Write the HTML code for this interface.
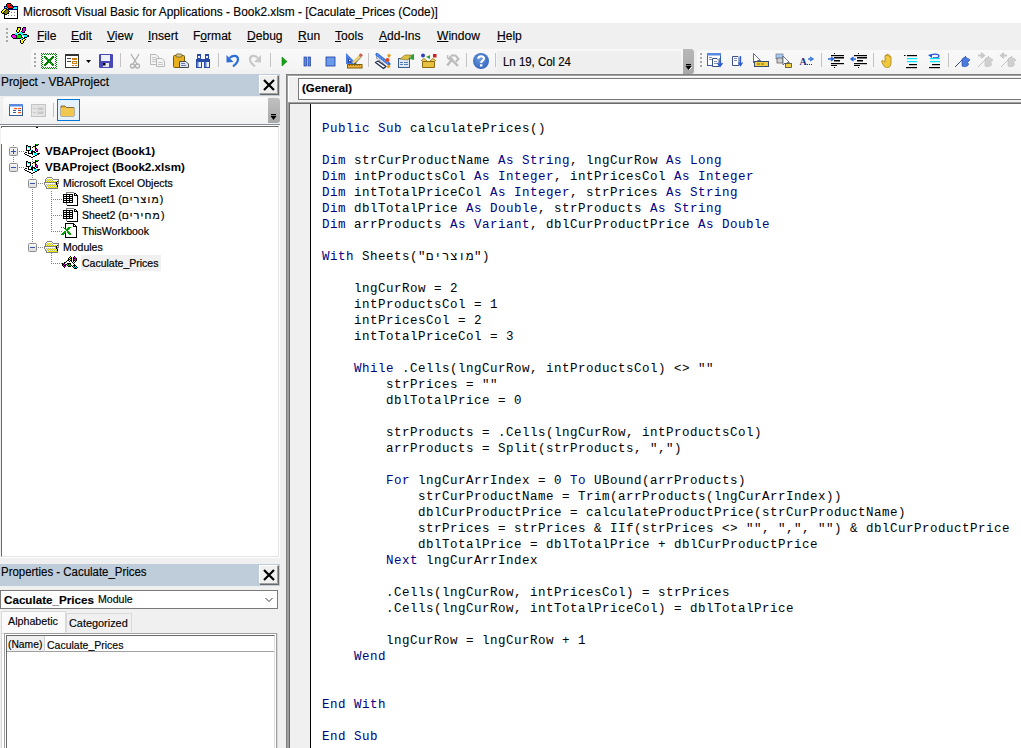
<!DOCTYPE html>
<html><head><meta charset="utf-8">
<style>
*{box-sizing:border-box;margin:0;padding:0}
html,body{width:1021px;height:748px;overflow:hidden;background:#f0f0f0;font-family:"Liberation Sans",sans-serif;position:relative}
.a{position:absolute}
.t{position:absolute;white-space:pre;line-height:1;color:#000;-webkit-text-stroke:.15px #000}
svg{position:absolute;overflow:visible}
.menu{position:absolute;top:30px;font-size:12.5px;transform:scaleX(.965);transform-origin:0 0;color:#000;-webkit-text-stroke:.15px #000;white-space:pre;line-height:12px}
.menu u{text-decoration:underline;text-underline-offset:1px;text-decoration-thickness:1px}
.ptitle{position:absolute;left:0;width:280px;height:22px;background:#bfcddb}
.xbtn{position:absolute;width:19px;height:19px;background:#f0f0f0;border:1px solid;border-color:#fff #a0a0a0 #a0a0a0 #fff;box-shadow:1px 1px 0 #696969}
.code{position:absolute;left:322px;top:121px;font-family:"Liberation Mono",monospace;font-size:12.5px;letter-spacing:.5px;line-height:16px;white-space:pre;color:#000}
.k{color:#00007f}
.tr{position:absolute;font-size:10.5px;white-space:pre;line-height:12px;color:#000;-webkit-text-stroke:.2px #000}
.trb{position:absolute;font-size:11.6px;font-weight:bold;white-space:pre;line-height:12px;color:#000}
</style></head><body>
<!-- title bar -->
<div class="a" style="left:0;top:0;width:1021px;height:23px;background:#fff"></div>
<svg style="left:0;top:0" width="24" height="23"><rect x="7" y="3" width="4" height="1" fill="#000"/>
<rect x="6" y="4" width="1" height="1" fill="#000"/>
<rect x="7" y="4" width="4" height="1" fill="#ff0000"/>
<rect x="11" y="4" width="1" height="1" fill="#000"/>
<rect x="6" y="5" width="1" height="1" fill="#000"/>
<rect x="7" y="5" width="3" height="1" fill="#ff0000"/>
<rect x="10" y="5" width="1" height="1" fill="#000"/>
<rect x="11" y="5" width="1" height="1" fill="#ff0000"/>
<rect x="12" y="5" width="1" height="1" fill="#000"/>
<rect x="4" y="6" width="2" height="1" fill="#000080"/>
<rect x="6" y="6" width="1" height="1" fill="#000"/>
<rect x="7" y="6" width="5" height="1" fill="#ff0000"/>
<rect x="12" y="6" width="1" height="1" fill="#000"/>
<rect x="13" y="6" width="5" height="1" fill="#000080"/>
<rect x="4" y="7" width="1" height="1" fill="#000080"/>
<rect x="5" y="7" width="2" height="1" fill="#00ffff"/>
<rect x="7" y="7" width="1" height="1" fill="#000"/>
<rect x="8" y="7" width="5" height="1" fill="#ff0000"/>
<rect x="13" y="7" width="1" height="1" fill="#000"/>
<rect x="14" y="7" width="3" height="1" fill="#00ffff"/>
<rect x="17" y="7" width="1" height="1" fill="#000080"/>
<rect x="4" y="8" width="1" height="1" fill="#000080"/>
<rect x="5" y="8" width="2" height="1" fill="#000"/>
<rect x="7" y="8" width="1" height="1" fill="#00ffff"/>
<rect x="8" y="8" width="5" height="1" fill="#000"/>
<rect x="13" y="8" width="4" height="1" fill="#00ffff"/>
<rect x="17" y="8" width="1" height="1" fill="#000080"/>
<rect x="3" y="9" width="1" height="1" fill="#000"/>
<rect x="4" y="9" width="2" height="1" fill="#ffff00"/>
<rect x="6" y="9" width="1" height="1" fill="#000"/>
<rect x="7" y="9" width="11" height="1" fill="#000080"/>
<rect x="2" y="10" width="1" height="1" fill="#000"/>
<rect x="3" y="10" width="2" height="1" fill="#ffff00"/>
<rect x="5" y="10" width="1" height="1" fill="#000"/>
<rect x="6" y="10" width="2" height="1" fill="#808000"/>
<rect x="8" y="10" width="1" height="1" fill="#000"/>
<rect x="9" y="10" width="8" height="1" fill="#fff"/>
<rect x="17" y="10" width="1" height="1" fill="#000"/>
<rect x="1" y="11" width="1" height="1" fill="#000"/>
<rect x="2" y="11" width="2" height="1" fill="#ffff00"/>
<rect x="4" y="11" width="1" height="1" fill="#000"/>
<rect x="5" y="11" width="4" height="1" fill="#808000"/>
<rect x="9" y="11" width="1" height="1" fill="#000"/>
<rect x="10" y="11" width="7" height="1" fill="#fff"/>
<rect x="17" y="11" width="1" height="1" fill="#000"/>
<rect x="1" y="12" width="1" height="1" fill="#000"/>
<rect x="2" y="12" width="1" height="1" fill="#ffff00"/>
<rect x="3" y="12" width="1" height="1" fill="#000"/>
<rect x="4" y="12" width="4" height="1" fill="#808000"/>
<rect x="8" y="12" width="1" height="1" fill="#000"/>
<rect x="9" y="12" width="2" height="1" fill="#fff"/>
<rect x="11" y="12" width="1" height="1" fill="#808080"/>
<rect x="12" y="12" width="2" height="1" fill="#fff"/>
<rect x="14" y="12" width="1" height="1" fill="#808080"/>
<rect x="15" y="12" width="2" height="1" fill="#fff"/>
<rect x="17" y="12" width="1" height="1" fill="#000"/>
<rect x="2" y="13" width="3" height="1" fill="#000"/>
<rect x="5" y="13" width="2" height="1" fill="#808000"/>
<rect x="7" y="13" width="2" height="1" fill="#000"/>
<rect x="9" y="13" width="8" height="1" fill="#fff"/>
<rect x="17" y="13" width="1" height="1" fill="#000"/>
<rect x="4" y="14" width="3" height="1" fill="#000"/>
<rect x="7" y="14" width="10" height="1" fill="#fff"/>
<rect x="17" y="14" width="1" height="1" fill="#000"/>
<rect x="4" y="15" width="1" height="1" fill="#000"/>
<rect x="5" y="15" width="3" height="1" fill="#fff"/>
<rect x="8" y="15" width="1" height="1" fill="#808080"/>
<rect x="9" y="15" width="2" height="1" fill="#fff"/>
<rect x="11" y="15" width="1" height="1" fill="#808080"/>
<rect x="12" y="15" width="2" height="1" fill="#fff"/>
<rect x="14" y="15" width="1" height="1" fill="#808080"/>
<rect x="15" y="15" width="2" height="1" fill="#fff"/>
<rect x="17" y="15" width="1" height="1" fill="#000"/>
<rect x="4" y="16" width="1" height="1" fill="#000"/>
<rect x="5" y="16" width="12" height="1" fill="#fff"/>
<rect x="17" y="16" width="1" height="1" fill="#000"/>
<rect x="4" y="17" width="1" height="1" fill="#000"/>
<rect x="5" y="17" width="12" height="1" fill="#fff"/>
<rect x="17" y="17" width="1" height="1" fill="#000"/>
<rect x="4" y="18" width="14" height="1" fill="#000"/></svg>
<div class="t" style="left:23px;top:6px;font-size:12.5px;transform:scaleX(.95);transform-origin:0 0">Microsoft Visual Basic for Applications - Book2.xlsm - [Caculate_Prices (Code)]</div>

<!-- menu bar -->
<svg style="left:0;top:0" width="40" height="49">
 <g fill="#a8a8a8"><rect x="6" y="28" width="2" height="2"/><rect x="6" y="32" width="2" height="2"/><rect x="6" y="36" width="2" height="2"/><rect x="6" y="40" width="2" height="2"/></g>
 <!-- vba icon -->
<rect x="17" y="27" width="4" height="1" fill="#000"/>
<rect x="23" y="27" width="3" height="1" fill="#000"/>
<rect x="17" y="28" width="1" height="1" fill="#000"/>
<rect x="18" y="28" width="2" height="1" fill="#ffff00"/>
<rect x="20" y="28" width="1" height="1" fill="#000"/>
<rect x="22" y="28" width="1" height="1" fill="#000"/>
<rect x="23" y="28" width="2" height="1" fill="#ff00ff"/>
<rect x="25" y="28" width="1" height="1" fill="#000"/>
<rect x="17" y="29" width="1" height="1" fill="#000"/>
<rect x="18" y="29" width="2" height="1" fill="#ffff00"/>
<rect x="20" y="29" width="1" height="1" fill="#000"/>
<rect x="22" y="29" width="1" height="1" fill="#000"/>
<rect x="23" y="29" width="2" height="1" fill="#ff00ff"/>
<rect x="25" y="29" width="1" height="1" fill="#000"/>
<rect x="16" y="30" width="1" height="1" fill="#000"/>
<rect x="17" y="30" width="2" height="1" fill="#ffff00"/>
<rect x="19" y="30" width="1" height="1" fill="#000"/>
<rect x="22" y="30" width="1" height="1" fill="#000"/>
<rect x="23" y="30" width="2" height="1" fill="#ff00ff"/>
<rect x="25" y="30" width="1" height="1" fill="#000"/>
<rect x="16" y="31" width="1" height="1" fill="#000"/>
<rect x="17" y="31" width="2" height="1" fill="#ffff00"/>
<rect x="19" y="31" width="1" height="1" fill="#000"/>
<rect x="21" y="31" width="1" height="1" fill="#000"/>
<rect x="22" y="31" width="2" height="1" fill="#ff00ff"/>
<rect x="24" y="31" width="1" height="1" fill="#000"/>
<rect x="17" y="32" width="2" height="1" fill="#000"/>
<rect x="20" y="32" width="2" height="1" fill="#00ffff"/>
<rect x="22" y="32" width="3" height="1" fill="#000"/>
<rect x="15" y="33" width="2" height="1" fill="#00ffff"/>
<rect x="19" y="33" width="4" height="1" fill="#00ffff"/>
<rect x="12" y="34" width="3" height="1" fill="#000"/>
<rect x="15" y="34" width="2" height="1" fill="#00ffff"/>
<rect x="18" y="34" width="3" height="1" fill="#000"/>
<rect x="21" y="34" width="2" height="1" fill="#00ffff"/>
<rect x="23" y="34" width="4" height="1" fill="#000"/>
<rect x="11" y="35" width="1" height="1" fill="#000"/>
<rect x="12" y="35" width="3" height="1" fill="#ff00ff"/>
<rect x="15" y="35" width="2" height="1" fill="#000"/>
<rect x="17" y="35" width="4" height="1" fill="#00e000"/>
<rect x="21" y="35" width="1" height="1" fill="#000"/>
<rect x="22" y="35" width="1" height="1" fill="#fff"/>
<rect x="23" y="35" width="4" height="1" fill="#00ffff"/>
<rect x="27" y="35" width="2" height="1" fill="#000"/>
<rect x="11" y="36" width="1" height="1" fill="#000"/>
<rect x="12" y="36" width="4" height="1" fill="#ff00ff"/>
<rect x="16" y="36" width="1" height="1" fill="#000"/>
<rect x="17" y="36" width="4" height="1" fill="#00e000"/>
<rect x="21" y="36" width="1" height="1" fill="#000"/>
<rect x="22" y="36" width="2" height="1" fill="#fff"/>
<rect x="24" y="36" width="3" height="1" fill="#00ffff"/>
<rect x="27" y="36" width="2" height="1" fill="#000"/>
<rect x="12" y="37" width="1" height="1" fill="#000"/>
<rect x="13" y="37" width="3" height="1" fill="#ff00ff"/>
<rect x="16" y="37" width="1" height="1" fill="#000"/>
<rect x="17" y="37" width="4" height="1" fill="#00e000"/>
<rect x="21" y="37" width="2" height="1" fill="#000"/>
<rect x="23" y="37" width="1" height="1" fill="#fff"/>
<rect x="24" y="37" width="3" height="1" fill="#000"/>
<rect x="13" y="38" width="8" height="1" fill="#000"/>
<rect x="21" y="38" width="2" height="1" fill="#00ffff"/>
<rect x="23" y="38" width="2" height="1" fill="#000"/>
<rect x="21" y="39" width="1" height="1" fill="#00ffff"/>
<rect x="22" y="39" width="1" height="1" fill="#000"/>
<rect x="23" y="39" width="2" height="1" fill="#ffff00"/>
<rect x="25" y="39" width="1" height="1" fill="#000"/>
<rect x="20" y="40" width="1" height="1" fill="#000"/>
<rect x="21" y="40" width="3" height="1" fill="#ffff00"/>
<rect x="24" y="40" width="1" height="1" fill="#000"/>
<rect x="20" y="41" width="1" height="1" fill="#000"/>
<rect x="21" y="41" width="2" height="1" fill="#ffff00"/>
<rect x="23" y="41" width="1" height="1" fill="#000"/>
<rect x="20" y="42" width="1" height="1" fill="#000"/>
<rect x="21" y="42" width="2" height="1" fill="#ffff00"/>
<rect x="23" y="42" width="1" height="1" fill="#000"/>
<rect x="21" y="43" width="2" height="1" fill="#000"/>
</svg>
<div class="menu" style="left:37px"><u>F</u>ile</div>
<div class="menu" style="left:71px"><u>E</u>dit</div>
<div class="menu" style="left:107px"><u>V</u>iew</div>
<div class="menu" style="left:148px"><u>I</u>nsert</div>
<div class="menu" style="left:193px">F<u>o</u>rmat</div>
<div class="menu" style="left:247px"><u>D</u>ebug</div>
<div class="menu" style="left:298px"><u>R</u>un</div>
<div class="menu" style="left:335px"><u>T</u>ools</div>
<div class="menu" style="left:379px"><u>A</u>dd-Ins</div>
<div class="menu" style="left:437px"><u>W</u>indow</div>
<div class="menu" style="left:497px"><u>H</u>elp</div>

<!-- toolbars bg -->
<div class="a" style="left:31px;top:49px;width:663px;height:25px;background:linear-gradient(#f9f9f9,#f5f5f5 70%,#f1f1f1);border-top-left-radius:4px"></div>
<div class="a" style="left:497px;top:51px;width:184px;height:22px;background:#efefef"></div>
<div class="a" style="left:683px;top:49px;width:11px;height:25px;background:linear-gradient(#b8b8b8,#a8a8a8);border-radius:0 3px 3px 0"></div>
<svg style="left:683px;top:49px" width="11" height="25"><rect x="3" y="15" width="5" height="1.3" fill="#000"/><path d="M2.5 17 L8.5 17 L5.5 21 Z" fill="#000"/><path d="M6 21 L9 18" stroke="#fff" stroke-width="1"/></svg>
<div class="a" style="left:697px;top:50px;width:324px;height:24px;background:linear-gradient(#f9f9f9,#f5f5f5 70%,#f1f1f1);border-top-left-radius:4px"></div>
<div class="t" style="left:503px;top:56px;font-size:12.5px;transform:scaleX(.914);transform-origin:0 0">Ln 19, Col 24</div>

<svg id="tbicons" style="left:0;top:0" width="1021" height="75">
 <!-- grips -->
 <g fill="#a8a8a8"><rect x="34" y="53" width="2" height="2"/><rect x="34" y="57" width="2" height="2"/><rect x="34" y="61" width="2" height="2"/><rect x="34" y="65" width="2" height="2"/>
 <rect x="700" y="53" width="2" height="2"/><rect x="700" y="57" width="2" height="2"/><rect x="700" y="61" width="2" height="2"/><rect x="700" y="65" width="2" height="2"/></g>
 <!-- separators -->
 <g fill="#c4c4c4"><rect x="120" y="53" width="1" height="14"/><rect x="218" y="53" width="1" height="14"/><rect x="270" y="53" width="1" height="14"/><rect x="368" y="53" width="1" height="14"/><rect x="466" y="53" width="1" height="14"/><rect x="495" y="53" width="1" height="14"/>
 <rect x="821" y="53" width="1" height="14"/><rect x="873" y="53" width="1" height="14"/><rect x="948" y="53" width="1" height="14"/></g>
 <!-- excel -->
<rect x="41" y="53" width="1" height="1" fill="#008000"/>
<rect x="42" y="53" width="1" height="1" fill="#fff"/>
<rect x="43" y="53" width="1" height="1" fill="#008000"/>
<rect x="44" y="53" width="1" height="1" fill="#fff"/>
<rect x="45" y="53" width="1" height="1" fill="#008000"/>
<rect x="46" y="53" width="1" height="1" fill="#fff"/>
<rect x="47" y="53" width="1" height="1" fill="#008000"/>
<rect x="48" y="53" width="1" height="1" fill="#fff"/>
<rect x="49" y="53" width="1" height="1" fill="#008000"/>
<rect x="50" y="53" width="1" height="1" fill="#fff"/>
<rect x="51" y="53" width="1" height="1" fill="#008000"/>
<rect x="52" y="53" width="1" height="1" fill="#fff"/>
<rect x="53" y="53" width="1" height="1" fill="#008000"/>
<rect x="54" y="53" width="1" height="1" fill="#fff"/>
<rect x="55" y="53" width="1" height="1" fill="#008000"/>
<rect x="56" y="53" width="1" height="1" fill="#fff"/>
<rect x="41" y="54" width="1" height="1" fill="#fff"/>
<rect x="42" y="54" width="1" height="1" fill="#008000"/>
<rect x="43" y="54" width="1" height="1" fill="#fff"/>
<rect x="44" y="54" width="1" height="1" fill="#008000"/>
<rect x="45" y="54" width="1" height="1" fill="#fff"/>
<rect x="46" y="54" width="1" height="1" fill="#008000"/>
<rect x="47" y="54" width="1" height="1" fill="#fff"/>
<rect x="48" y="54" width="1" height="1" fill="#008000"/>
<rect x="49" y="54" width="1" height="1" fill="#fff"/>
<rect x="50" y="54" width="1" height="1" fill="#008000"/>
<rect x="51" y="54" width="1" height="1" fill="#fff"/>
<rect x="52" y="54" width="1" height="1" fill="#008000"/>
<rect x="53" y="54" width="1" height="1" fill="#fff"/>
<rect x="54" y="54" width="1" height="1" fill="#008000"/>
<rect x="55" y="54" width="1" height="1" fill="#fff"/>
<rect x="56" y="54" width="1" height="1" fill="#008000"/>
<rect x="41" y="55" width="1" height="1" fill="#008000"/>
<rect x="42" y="55" width="13" height="1" fill="#fff"/>
<rect x="55" y="55" width="1" height="1" fill="#008000"/>
<rect x="56" y="55" width="1" height="1" fill="#fff"/>
<rect x="41" y="56" width="1" height="1" fill="#fff"/>
<rect x="42" y="56" width="1" height="1" fill="#008000"/>
<rect x="43" y="56" width="1" height="1" fill="#fff"/>
<rect x="44" y="56" width="2" height="1" fill="#008000"/>
<rect x="46" y="56" width="6" height="1" fill="#fff"/>
<rect x="52" y="56" width="2" height="1" fill="#008000"/>
<rect x="54" y="56" width="2" height="1" fill="#fff"/>
<rect x="56" y="56" width="1" height="1" fill="#008000"/>
<rect x="41" y="57" width="1" height="1" fill="#008000"/>
<rect x="42" y="57" width="2" height="1" fill="#fff"/>
<rect x="44" y="57" width="1" height="1" fill="#008000"/>
<rect x="45" y="57" width="1" height="1" fill="#60b060"/>
<rect x="46" y="57" width="1" height="1" fill="#008000"/>
<rect x="47" y="57" width="4" height="1" fill="#fff"/>
<rect x="51" y="57" width="3" height="1" fill="#008000"/>
<rect x="54" y="57" width="1" height="1" fill="#fff"/>
<rect x="55" y="57" width="1" height="1" fill="#008000"/>
<rect x="56" y="57" width="1" height="1" fill="#fff"/>
<rect x="41" y="58" width="1" height="1" fill="#fff"/>
<rect x="42" y="58" width="1" height="1" fill="#008000"/>
<rect x="43" y="58" width="2" height="1" fill="#fff"/>
<rect x="45" y="58" width="3" height="1" fill="#008000"/>
<rect x="48" y="58" width="2" height="1" fill="#fff"/>
<rect x="50" y="58" width="3" height="1" fill="#008000"/>
<rect x="53" y="58" width="3" height="1" fill="#fff"/>
<rect x="56" y="58" width="1" height="1" fill="#008000"/>
<rect x="41" y="59" width="1" height="1" fill="#008000"/>
<rect x="42" y="59" width="4" height="1" fill="#fff"/>
<rect x="46" y="59" width="1" height="1" fill="#008000"/>
<rect x="47" y="59" width="1" height="1" fill="#60b060"/>
<rect x="48" y="59" width="4" height="1" fill="#008000"/>
<rect x="52" y="59" width="3" height="1" fill="#fff"/>
<rect x="55" y="59" width="1" height="1" fill="#008000"/>
<rect x="56" y="59" width="1" height="1" fill="#fff"/>
<rect x="41" y="60" width="1" height="1" fill="#fff"/>
<rect x="42" y="60" width="1" height="1" fill="#008000"/>
<rect x="43" y="60" width="4" height="1" fill="#fff"/>
<rect x="47" y="60" width="4" height="1" fill="#008000"/>
<rect x="51" y="60" width="5" height="1" fill="#fff"/>
<rect x="56" y="60" width="1" height="1" fill="#008000"/>
<rect x="41" y="61" width="1" height="1" fill="#008000"/>
<rect x="42" y="61" width="5" height="1" fill="#fff"/>
<rect x="47" y="61" width="2" height="1" fill="#008000"/>
<rect x="49" y="61" width="1" height="1" fill="#60b060"/>
<rect x="50" y="61" width="1" height="1" fill="#008000"/>
<rect x="51" y="61" width="4" height="1" fill="#fff"/>
<rect x="55" y="61" width="1" height="1" fill="#008000"/>
<rect x="56" y="61" width="1" height="1" fill="#fff"/>
<rect x="41" y="62" width="1" height="1" fill="#fff"/>
<rect x="42" y="62" width="1" height="1" fill="#008000"/>
<rect x="43" y="62" width="3" height="1" fill="#fff"/>
<rect x="46" y="62" width="6" height="1" fill="#008000"/>
<rect x="52" y="62" width="4" height="1" fill="#fff"/>
<rect x="56" y="62" width="1" height="1" fill="#008000"/>
<rect x="41" y="63" width="1" height="1" fill="#008000"/>
<rect x="42" y="63" width="3" height="1" fill="#fff"/>
<rect x="45" y="63" width="3" height="1" fill="#008000"/>
<rect x="48" y="63" width="2" height="1" fill="#fff"/>
<rect x="50" y="63" width="1" height="1" fill="#008000"/>
<rect x="51" y="63" width="1" height="1" fill="#60b060"/>
<rect x="52" y="63" width="1" height="1" fill="#008000"/>
<rect x="53" y="63" width="2" height="1" fill="#fff"/>
<rect x="55" y="63" width="1" height="1" fill="#008000"/>
<rect x="56" y="63" width="1" height="1" fill="#fff"/>
<rect x="41" y="64" width="1" height="1" fill="#fff"/>
<rect x="42" y="64" width="1" height="1" fill="#008000"/>
<rect x="43" y="64" width="1" height="1" fill="#fff"/>
<rect x="44" y="64" width="3" height="1" fill="#008000"/>
<rect x="47" y="64" width="4" height="1" fill="#fff"/>
<rect x="51" y="64" width="3" height="1" fill="#008000"/>
<rect x="54" y="64" width="2" height="1" fill="#fff"/>
<rect x="56" y="64" width="1" height="1" fill="#008000"/>
<rect x="41" y="65" width="1" height="1" fill="#008000"/>
<rect x="42" y="65" width="2" height="1" fill="#fff"/>
<rect x="44" y="65" width="2" height="1" fill="#008000"/>
<rect x="46" y="65" width="6" height="1" fill="#fff"/>
<rect x="52" y="65" width="1" height="1" fill="#008000"/>
<rect x="53" y="65" width="1" height="1" fill="#60b060"/>
<rect x="54" y="65" width="1" height="1" fill="#fff"/>
<rect x="55" y="65" width="1" height="1" fill="#008000"/>
<rect x="56" y="65" width="1" height="1" fill="#fff"/>
<rect x="41" y="66" width="1" height="1" fill="#fff"/>
<rect x="42" y="66" width="1" height="1" fill="#008000"/>
<rect x="43" y="66" width="13" height="1" fill="#fff"/>
<rect x="56" y="66" width="1" height="1" fill="#008000"/>
<rect x="41" y="67" width="1" height="1" fill="#008000"/>
<rect x="42" y="67" width="1" height="1" fill="#fff"/>
<rect x="43" y="67" width="1" height="1" fill="#008000"/>
<rect x="44" y="67" width="1" height="1" fill="#fff"/>
<rect x="45" y="67" width="1" height="1" fill="#008000"/>
<rect x="46" y="67" width="1" height="1" fill="#fff"/>
<rect x="47" y="67" width="1" height="1" fill="#008000"/>
<rect x="48" y="67" width="1" height="1" fill="#fff"/>
<rect x="49" y="67" width="1" height="1" fill="#008000"/>
<rect x="50" y="67" width="1" height="1" fill="#fff"/>
<rect x="51" y="67" width="1" height="1" fill="#008000"/>
<rect x="52" y="67" width="1" height="1" fill="#fff"/>
<rect x="53" y="67" width="1" height="1" fill="#008000"/>
<rect x="54" y="67" width="1" height="1" fill="#fff"/>
<rect x="55" y="67" width="1" height="1" fill="#008000"/>
<rect x="56" y="67" width="1" height="1" fill="#fff"/>
<rect x="41" y="68" width="1" height="1" fill="#fff"/>
<rect x="42" y="68" width="1" height="1" fill="#008000"/>
<rect x="43" y="68" width="1" height="1" fill="#fff"/>
<rect x="44" y="68" width="1" height="1" fill="#008000"/>
<rect x="45" y="68" width="1" height="1" fill="#fff"/>
<rect x="46" y="68" width="1" height="1" fill="#008000"/>
<rect x="47" y="68" width="1" height="1" fill="#fff"/>
<rect x="48" y="68" width="1" height="1" fill="#008000"/>
<rect x="49" y="68" width="1" height="1" fill="#fff"/>
<rect x="50" y="68" width="1" height="1" fill="#008000"/>
<rect x="51" y="68" width="1" height="1" fill="#fff"/>
<rect x="52" y="68" width="1" height="1" fill="#008000"/>
<rect x="53" y="68" width="1" height="1" fill="#fff"/>
<rect x="54" y="68" width="1" height="1" fill="#008000"/>
<rect x="55" y="68" width="1" height="1" fill="#fff"/>
<rect x="56" y="68" width="1" height="1" fill="#008000"/>
 <!-- userform -->
 <rect x="65.5" y="54.5" width="13" height="13" fill="#fff" stroke="#333"/>
 <rect x="65" y="54" width="14" height="2" fill="#333"/>
 <rect x="67" y="58" width="4" height="1" fill="#444"/><rect x="67" y="61" width="4" height="1" fill="#444"/>
 <rect x="72" y="58" width="5" height="2" fill="#d08010"/><rect x="72.5" y="61.5" width="4" height="2" fill="none" stroke="#d08010"/><rect x="72" y="65" width="2" height="1" fill="#d08010"/><rect x="75" y="65" width="2" height="1" fill="#d08010"/>
 <path d="M86 60 L91 60 L88.5 63 Z" fill="#000"/>
 <!-- save -->
 <rect x="99" y="54" width="14" height="14" rx="1" fill="#4848b8"/>
 <rect x="101" y="55" width="9" height="6" fill="#eef0f8"/>
 <rect x="103" y="63" width="6" height="4" fill="#e8e8f0"/><rect x="103" y="63" width="2.5" height="2.5" fill="#000"/>
 <!-- cut gray -->
 <g stroke="#b0b0b0" fill="none" stroke-width="1.3"><path d="M131 54 L137 64 M139 54 L133 64"/><circle cx="132.5" cy="66" r="2"/><circle cx="137.5" cy="66" r="2"/></g>
 <!-- copy gray -->
 <g fill="#f4f4f4" stroke="#b8b8b8"><path d="M150.5 54.5 H156 L158.5 57 V64.5 H150.5 Z"/><path d="M156.5 58.5 H162 L164.5 61 V66.5 H156.5 Z"/></g>
 <g fill="#c8c8c8"><rect x="152" y="57" width="4" height="1"/><rect x="152" y="59" width="4" height="1"/><rect x="152" y="61" width="4" height="1"/><rect x="158" y="62" width="5" height="1"/><rect x="158" y="64" width="5" height="1"/></g>
 <!-- paste -->
 <rect x="173.5" y="55.5" width="11" height="12" rx="1" fill="#e8b020" stroke="#7a5a10"/>
 <rect x="176" y="54" width="6" height="3" rx="1" fill="#d8c890" stroke="#6a5a20" stroke-width=".8"/>
 <path d="M179.5 61.5 H186 L188.5 64 V67.5 H179.5 Z" fill="#dde6f2" stroke="#4a4a4a"/>
 <rect x="181" y="63" width="4" height="1" fill="#6a7ab0"/><rect x="181" y="65" width="5" height="1" fill="#6a7ab0"/>
 <!-- find binoculars -->
 <g fill="#2a4aa8">
  <rect x="197" y="54" width="4" height="5"/><rect x="205" y="54" width="4" height="5"/>
  <rect x="196" y="59" width="6" height="9"/><rect x="204" y="59" width="6" height="9"/>
  <rect x="202" y="59" width="2" height="3"/>
 </g>
 <g fill="#e8f0fc"><rect x="198" y="56" width="2" height="2"/><rect x="206" y="56" width="2" height="2"/>
  <rect x="197" y="62" width="4" height="5"/><rect x="205" y="62" width="4" height="5"/></g>
 <g fill="#5a80d0"><rect x="197" y="62" width="1.5" height="5"/><rect x="205" y="62" width="1.5" height="5"/></g>
 <!-- undo -->
 <path d="M229.5 58 C233 55 238 55 238 59.5 C238 62 236 64 233 66.5" stroke="#2f6fd8" stroke-width="2.2" fill="none"/>
 <path d="M226.5 55 L226.5 62.5 L233.5 62 Z" fill="#2f6fd8"/>
 <!-- redo gray -->
 <path d="M258 58 C254.5 55 250 55 250 59.5 C250 62 252 64 255 66.5" stroke="#c8c8c8" stroke-width="2.2" fill="none"/>
 <path d="M261 55 L261 62.5 L254 62 Z" fill="#c8c8c8"/>
 <!-- run -->
 <path d="M282 57 L287 61.5 L282 66 Z" fill="#18a018" stroke="#0a800a" stroke-width=".6"/>
 <!-- pause -->
 <rect x="304" y="57" width="2.5" height="9" fill="#5a8ae0" stroke="#1a3aa0" stroke-width=".7"/>
 <rect x="308" y="57" width="2.5" height="9" fill="#5a8ae0" stroke="#1a3aa0" stroke-width=".7"/>
 <!-- stop -->
 <rect x="326" y="57" width="9" height="9" fill="#6a9ae8" stroke="#1a3aa0" stroke-width=".8"/>
 <!-- design mode -->
 <path d="M346 53 L346 64 L357 64 Z" fill="#4a7ae0"/>
 <path d="M348 58.5 L348 62.5 L352 62.5 Z" fill="#1a3a98"/>
 <rect x="349" y="60" width="1.2" height="1.2" fill="#fff"/>
 <path d="M353 63 L360 56" stroke="#e8d070" stroke-width="2.6"/>
 <path d="M354.5 64 L361.2 57.2" stroke="#000" stroke-width=".9" stroke-dasharray="1 .6"/>
 <circle cx="360.8" cy="55.2" r="1.7" fill="#c86050"/>
 <rect x="347.5" y="64.5" width="14.5" height="3.5" fill="#f4b040" stroke="#7a6000" stroke-width="1"/>
 <g fill="#8a6a10"><rect x="349" y="65" width="1" height="1"/><rect x="351.5" y="65" width="1" height="1"/><rect x="354" y="65" width="1" height="1"/><rect x="356.5" y="65" width="1" height="1"/><rect x="359" y="65" width="1" height="1"/></g>
 <!-- project explorer -->
 <path d="M375.5 62.5 L378 61 L386 66.5 L383.5 68.5 Z" fill="#fff" stroke="#1e2e50" stroke-width="1.3" stroke-linejoin="round"/>
 <path d="M376.5 55 V59" stroke="#9aa4b4" stroke-width="1"/>
 <path d="M377.5 58.5 L384.5 64.5" stroke="#303848" stroke-width="1" stroke-dasharray="1 1"/>
 <path d="M377 54.5 L389 64" stroke="#3a70dc" stroke-width="3.2" stroke-linecap="round"/>
 <path d="M377 54.5 L388 63.3" stroke="#a8d8ff" stroke-width="1" stroke-dasharray="1 1.2"/>
 <path d="M389 53.5 L391 55.5 L389 58 L387 55.5 Z" fill="#e8a020"/>
 <path d="M388.5 64.5 L390.5 66.5 L388.5 68.5 L386.5 66.5 Z" fill="#e8a020"/>
 <circle cx="387.5" cy="60" r="2" fill="#e04a20"/>
 <!-- properties -->
 <rect x="398.5" y="58.5" width="11" height="9" fill="#dde8f8" stroke="#3a5a90"/>
 <rect x="400" y="62" width="3" height="1" fill="#5a7ab0"/><rect x="404" y="62" width="4" height="1" fill="#5a7ab0"/><rect x="400" y="64" width="3" height="1" fill="#5a7ab0"/><rect x="404" y="64" width="4" height="1" fill="#5a7ab0"/>
 <path d="M400 59 L405 55 L411 55 L408 60 Z" fill="#e0c040" stroke="#7a6a20" stroke-width=".6"/>
 <path d="M411 55 L414 54 L414 60 L410 59 Z" fill="#30a030"/>
 <!-- object browser -->
 <circle cx="423" cy="55.5" r="2" fill="#3040c0"/>
 <path d="M426 57 L430 55 L430 59 Z" fill="#30a030"/>
 <rect x="433" y="54" width="3.5" height="3.5" fill="#d02020"/>
 <path d="M422.5 61.5 L434.5 61.5 L434.5 67.5 L422.5 67.5 Z" fill="#e8c040" stroke="#8a6a10"/>
 <path d="M421 61 L424 58.5 L427 61 M430 61 L433 58.5 L436 61" stroke="#b08010" fill="#f0d060"/>
 <!-- toolbox gray -->
 <g stroke="#bcbcbc" fill="none" stroke-linecap="square">
  <path d="M452 59.5 L448 64.5" stroke-width="2.4"/>
  <path d="M450 58 L457 65" stroke-width="2.4"/>
  <path d="M447.5 56 C447 58.5 449.5 60 451.5 58.5 L450.5 56.5" stroke-width="1.6"/>
  <path d="M452 55.5 L455.5 55.5 L458.5 59 L456.5 61" stroke-width="2"/>
 </g>
 <!-- help -->
 <defs><radialGradient id="hg" cx=".45" cy=".4" r=".6"><stop offset="0" stop-color="#6a9ae0"/><stop offset="1" stop-color="#3568c0"/></radialGradient></defs>
 <circle cx="481" cy="61" r="8" fill="url(#hg)"/>
 <path d="M478.3 58.8 C478.3 55.6 484 55.6 484 58.6 C484 60.6 481.2 60.8 481.2 63" stroke="#fff" stroke-width="2.2" fill="none"/>
 <rect x="480" y="64.3" width="2.4" height="2.2" fill="#fff"/>
 <!-- list props -->
 <rect x="707.5" y="53.5" width="13" height="12" fill="#fff" stroke="#3a60b0"/>
 <rect x="707" y="53" width="14" height="2.5" fill="#5a8ae0"/>
 <path d="M712.5 58.5 H717 L719 60.5 V66.5 H712.5 Z" fill="#fff" stroke="#3a5080"/>
 <g fill="#8090c0"><rect x="709" y="57" width="3" height="1"/><rect x="709" y="59" width="3" height="1"/><rect x="714" y="61" width="3" height="1"/><rect x="714" y="63" width="3" height="1"/></g>
 <path d="M720 58 V65 M717.5 63 L720 66.5 L722.5 63" stroke="#2a5ad0" stroke-width="1.3" fill="none"/>
 <!-- list consts -->
 <path d="M732.5 56.5 H738 L739 57.5 V65.5 H732.5 Z" fill="#fff" stroke="#3a5080"/>
 <g fill="#8090c0"><rect x="734" y="58" width="3" height="1"/><rect x="734" y="60" width="3" height="1"/></g>
 <path d="M740.5 56 V64.5 M738.5 62.5 L740.5 65.5 L742.5 62.5" stroke="#2a5ad0" stroke-width="1.3" fill="none"/>
 <!-- quick info -->
 <path d="M753.5 53.5 V63 L755.5 61 L757.5 64.5 L759 64 L757.5 60.5 L760.5 60.5 Z" fill="#fff" stroke="#3a4a70" stroke-width=".8"/>
 <rect x="754.5" y="61.5" width="14" height="5" fill="#f0d040" stroke="#3a4a70"/>
 <rect x="757" y="63.5" width="3" height="1" fill="#806010"/><rect x="761" y="63.5" width="3" height="1" fill="#806010"/>
 <!-- param info -->
 <rect x="776" y="54" width="7" height="5" fill="#a8c8f0" stroke="#6a7a90" stroke-width=".7"/>
 <rect x="777" y="58" width="6" height="5" fill="#d0d0d0" stroke="#505050" stroke-width=".7"/>
 <path d="M783 56 V65 L785 63 L787 67 L788 66.5 L787 62.5 L789.5 62.5 Z" fill="#fff" stroke="#4a5a70" stroke-width=".8"/>
 <rect x="785.5" y="63.5" width="6" height="4" fill="#f0d040" stroke="#4a4a30" stroke-width=".8"/>
 <!-- complete word -->
 <text x="799.5" y="65" font-size="10" font-weight="bold" fill="#1a2a80" font-family="Liberation Serif">A</text>
 <path d="M808 59 H812 M810 57 L813 59 L810 61" stroke="#3a7ad8" stroke-width="1.4" fill="none"/>
 <g fill="#1a2a80"><rect x="807" y="64" width="1" height="1"/><rect x="809" y="64" width="1" height="1"/><rect x="811" y="64" width="1" height="1"/></g>
 <!-- indent -->
 <g fill="#000"><rect x="834" y="53" width="1" height="1"/><rect x="831" y="55" width="13" height="1.2"/><rect x="834" y="57" width="10" height="1.5"/><rect x="834" y="60" width="6" height="1.5"/><rect x="831" y="63" width="13" height="1.2"/><rect x="831" y="65" width="6" height="1"/><rect x="834" y="67" width="1" height="1"/></g>
 <path d="M828 59 H833 M831 57 L833.5 59 L831 61" stroke="#2a6ae0" stroke-width="1.5" fill="none"/>
 <!-- outdent -->
 <g fill="#000"><rect x="858" y="53" width="1" height="1"/><rect x="854" y="55" width="13" height="1.2"/><rect x="857" y="57" width="10" height="1.5"/><rect x="857" y="60" width="6" height="1.5"/><rect x="854" y="63" width="13" height="1.2"/><rect x="854" y="65" width="6" height="1"/><rect x="858" y="67" width="1" height="1"/></g>
 <path d="M856 59 H851 M853.5 57 L851 59 L853.5 61" stroke="#2a6ae0" stroke-width="1.5" fill="none"/>
 <!-- hand -->
 <path d="M884 66 C882 63 881 61 882 60.5 C883 60 884 62 885 62 V56 C885 55 886.5 55 886.5 56 V55 C886.5 54 888 54 888 55 V55.5 C888 54.5 889.5 54.5 889.5 55.5 V57 C889.5 56 891 56 891 57 V63 C891 66 889.5 67.5 887.5 67.5 C886 67.5 885 67 884 66 Z" fill="#f0c840" stroke="#a88010" stroke-width=".8"/>
 <!-- comment -->
 <g fill="#000"><rect x="904" y="55" width="1.5" height="1"/><rect x="907" y="55" width="10" height="1.2"/><rect x="909" y="64" width="8" height="1.2"/><rect x="906" y="67" width="11" height="1.2"/></g>
 <g fill="#00e8ff"><rect x="907" y="58" width="10" height="1.2"/><rect x="907" y="61" width="10" height="1.2"/></g>
 <!-- uncomment -->
 <path d="M931 56 C931 53.5 939 53.5 939 56 C939 58 935 58.5 933 57.5" stroke="#1a50e0" stroke-width="1.3" fill="none"/>
 <path d="M928 55 L932 54 L932 58 Z" fill="#1a50e0"/>
 <g fill="#00e8ff"><rect x="930" y="58" width="10" height="1.2"/><rect x="930" y="61" width="10" height="1.2"/></g>
 <g fill="#000"><rect x="932" y="64" width="8" height="1.2"/><rect x="929" y="67" width="11" height="1.2"/></g>
 <!-- bookmark -->
 <path d="M955 67 L966 56" stroke="#2a4aa0" stroke-width="1"/>
 <path d="M962 59 C964 57 966 57 967 58 C968 59 970 59 970 60 L967 63 C969 63 969 64 968 65.5 C966 67 963 67 962 66 Z" fill="#4a7ae0" stroke="#2a4aa0" stroke-width=".6"/>
 <!-- next/prev bookmarks gray -->
 <g fill="#d0d0d0" stroke="#bdbdbd" stroke-width=".6">
 <path d="M985 59 C987 57 989 57 990 58 C991 59 993 59 993 60 L990 63 C992 63 992 64 991 65.5 C989 67 986 67 985 66 Z"/>
 <path d="M1008 59 C1010 57 1012 57 1013 58 C1014 59 1016 59 1016 60 L1013 63 C1015 63 1015 64 1014 65.5 C1012 67 1009 67 1008 66 Z"/></g>
 <path d="M978 67 L989 56 M1001 67 L1012 56" stroke="#c0c0c0" stroke-width="1"/>
 <path d="M978 55.5 H983 M981 53 L984 55.5 L981 58" stroke="#c8c8c8" stroke-width="2" fill="none"/>
 <path d="M1007 55.5 H1002 M1004 53 L1001 55.5 L1004 58" stroke="#c8c8c8" stroke-width="2" fill="none"/>
</svg>

<!-- Project pane -->
<div class="ptitle" style="top:74px"></div>
<div class="t" style="left:1px;top:76px;font-size:12.5px;transform:scaleX(.948);transform-origin:0 0">Project - VBAProject</div>
<div class="xbtn" style="left:259px;top:75px"></div>
<svg style="left:259px;top:75px" width="20" height="20"><path d="M5 5 L15 15 M15 5 L5 15" stroke="#000" stroke-width="2.2"/></svg>

<div class="a" style="left:3px;top:97px;width:266px;height:27px;background:linear-gradient(#fbfbfb,#f2f2f2);border-top-left-radius:4px"></div>
<div class="a" style="left:268px;top:98px;width:12px;height:25px;background:linear-gradient(#c0c0c0,#a8a8a8);border-radius:0 3px 3px 0"></div>
<svg style="left:268px;top:98px" width="12" height="25"><rect x="3" y="16" width="5" height="1.3" fill="#000"/><path d="M2.5 18 L8.5 18 L5.5 22 Z" fill="#000"/></svg>
<div class="a" style="left:0;top:124px;width:280px;height:1px;background:#848c98"></div>
<svg style="left:0;top:96px" width="90" height="30">
 <rect x="9.5" y="8.5" width="13" height="11" fill="#fff" stroke="#3a5a98"/>
 <rect x="9" y="8" width="14" height="2.5" fill="#5a8ae0"/>
 <g fill="#ff5020"><rect x="14" y="12" width="3" height="1.2"/><rect x="18" y="12" width="3" height="1.2"/><rect x="18" y="16" width="3" height="1.2"/></g>
 <g fill="#3a5a98"><rect x="13" y="14" width="3" height="1"/><rect x="18" y="14" width="3" height="1"/><rect x="13" y="16" width="3" height="1"/></g>
 <rect x="31.5" y="8.5" width="14" height="12" fill="#e4e4e4" stroke="#c4c4c4"/>
 <g fill="#c8c8c8"><rect x="33" y="12" width="3" height="1"/><rect x="37.5" y="11.5" width="6" height="2.5"/><rect x="33" y="16" width="3" height="1"/><rect x="37.5" y="15.5" width="6" height="2.5"/></g>
 <rect x="53" y="7" width="1" height="14" fill="#c0c0c0"/>
 <rect x="57.5" y="3.5" width="22" height="21" fill="#e5f1fb" stroke="#0078d7"/>
 <path d="M61 10 H65 L66.5 11.5 H74 V20 H61 Z" fill="#e8b838" stroke="#6a5020" stroke-width=".8"/>
 <path d="M61 12 H74 V20 H61 Z" fill="#f0c850"/>
</svg>

<div class="a" style="left:0;top:125px;width:280px;height:433px;background:#fff;border:1px solid;border-color:#fff #fff #fff #f0f0f0"></div><div class="a" style="left:1px;top:126px;width:278px;height:431px;background:#fff;border:1px solid;border-color:#696969 #e3e3e3 #e3e3e3 #696969"></div><div class="a" style="left:1px;top:128px;width:1px;height:16px;background:#fff"></div><div class="a" style="left:36px;top:127px;width:2px;height:1px;background:#000"></div>


<!-- tree -->
<svg style="left:0;top:0" width="280" height="290">
 <g fill="#808080">
  <!-- vertical dotted lines -->
 </g>
<g fill="#808080"><rect x="13" y="145" width="1" height="1"/><rect x="13" y="157" width="1" height="1"/><rect x="13" y="159" width="1" height="1"/><rect x="13" y="161" width="1" height="1"/><rect x="19" y="151" width="1" height="1"/><rect x="21" y="151" width="1" height="1"/><rect x="23" y="151" width="1" height="1"/><rect x="19" y="167" width="1" height="1"/><rect x="21" y="167" width="1" height="1"/><rect x="23" y="167" width="1" height="1"/><rect x="32" y="159" width="1" height="1"/><rect x="32" y="161" width="1" height="1"/><rect x="32" y="163" width="1" height="1"/><rect x="32" y="165" width="1" height="1"/><rect x="32" y="167" width="1" height="1"/><rect x="32" y="169" width="1" height="1"/><rect x="32" y="171" width="1" height="1"/><rect x="32" y="173" width="1" height="1"/><rect x="32" y="175" width="1" height="1"/><rect x="32" y="177" width="1" height="1"/><rect x="32" y="189" width="1" height="1"/><rect x="32" y="191" width="1" height="1"/><rect x="32" y="193" width="1" height="1"/><rect x="32" y="195" width="1" height="1"/><rect x="32" y="197" width="1" height="1"/><rect x="32" y="199" width="1" height="1"/><rect x="32" y="201" width="1" height="1"/><rect x="32" y="203" width="1" height="1"/><rect x="32" y="205" width="1" height="1"/><rect x="32" y="207" width="1" height="1"/><rect x="32" y="209" width="1" height="1"/><rect x="32" y="211" width="1" height="1"/><rect x="32" y="213" width="1" height="1"/><rect x="32" y="215" width="1" height="1"/><rect x="32" y="217" width="1" height="1"/><rect x="32" y="219" width="1" height="1"/><rect x="32" y="221" width="1" height="1"/><rect x="32" y="223" width="1" height="1"/><rect x="32" y="225" width="1" height="1"/><rect x="32" y="227" width="1" height="1"/><rect x="32" y="229" width="1" height="1"/><rect x="32" y="231" width="1" height="1"/><rect x="32" y="233" width="1" height="1"/><rect x="32" y="235" width="1" height="1"/><rect x="32" y="237" width="1" height="1"/><rect x="32" y="239" width="1" height="1"/><rect x="32" y="241" width="1" height="1"/><rect x="38" y="183" width="1" height="1"/><rect x="40" y="183" width="1" height="1"/><rect x="42" y="183" width="1" height="1"/><rect x="38" y="247" width="1" height="1"/><rect x="40" y="247" width="1" height="1"/><rect x="42" y="247" width="1" height="1"/><rect x="51" y="191" width="1" height="1"/><rect x="51" y="193" width="1" height="1"/><rect x="51" y="195" width="1" height="1"/><rect x="51" y="197" width="1" height="1"/><rect x="51" y="199" width="1" height="1"/><rect x="51" y="201" width="1" height="1"/><rect x="51" y="203" width="1" height="1"/><rect x="51" y="205" width="1" height="1"/><rect x="51" y="207" width="1" height="1"/><rect x="51" y="209" width="1" height="1"/><rect x="51" y="211" width="1" height="1"/><rect x="51" y="213" width="1" height="1"/><rect x="51" y="215" width="1" height="1"/><rect x="51" y="217" width="1" height="1"/><rect x="51" y="219" width="1" height="1"/><rect x="51" y="221" width="1" height="1"/><rect x="51" y="223" width="1" height="1"/><rect x="51" y="225" width="1" height="1"/><rect x="51" y="227" width="1" height="1"/><rect x="51" y="229" width="1" height="1"/><rect x="51" y="231" width="1" height="1"/><rect x="53" y="199" width="1" height="1"/><rect x="55" y="199" width="1" height="1"/><rect x="57" y="199" width="1" height="1"/><rect x="59" y="199" width="1" height="1"/><rect x="61" y="199" width="1" height="1"/><rect x="53" y="215" width="1" height="1"/><rect x="55" y="215" width="1" height="1"/><rect x="57" y="215" width="1" height="1"/><rect x="59" y="215" width="1" height="1"/><rect x="61" y="215" width="1" height="1"/><rect x="53" y="231" width="1" height="1"/><rect x="55" y="231" width="1" height="1"/><rect x="57" y="231" width="1" height="1"/><rect x="59" y="231" width="1" height="1"/><rect x="61" y="231" width="1" height="1"/><rect x="51" y="253" width="1" height="1"/><rect x="51" y="255" width="1" height="1"/><rect x="51" y="257" width="1" height="1"/><rect x="51" y="259" width="1" height="1"/><rect x="51" y="261" width="1" height="1"/><rect x="51" y="263" width="1" height="1"/><rect x="53" y="263" width="1" height="1"/><rect x="55" y="263" width="1" height="1"/><rect x="57" y="263" width="1" height="1"/><rect x="59" y="263" width="1" height="1"/><rect x="61" y="263" width="1" height="1"/></g>
 <!-- expanders -->
 <g fill="url(#exg)" stroke="#8c8c8c">
  <rect x="9.5" y="147.5" width="8" height="8" rx="1"/>
  <rect x="9.5" y="163.5" width="8" height="8" rx="1"/>
  <rect x="28.5" y="179.5" width="8" height="8" rx="1"/>
  <rect x="28.5" y="243.5" width="8" height="8" rx="1"/>
 </g>
 <defs><linearGradient id="exg" x1="0" y1="0" x2="0" y2="1"><stop offset="0" stop-color="#fafafa"/><stop offset="1" stop-color="#dcdcdc"/></linearGradient></defs>
 <g fill="#3a56a8">
  <rect x="11" y="151" width="5" height="1"/><rect x="13" y="149" width="1" height="5"/>
  <rect x="11" y="167" width="5" height="1"/>
  <rect x="30" y="183" width="5" height="1"/>
  <rect x="30" y="247" width="5" height="1"/>
 </g>
 <!-- project icons -->
<g id="pj"><rect x="35" y="144" width="1" height="1" fill="#000"/>
<rect x="36" y="144" width="2" height="1" fill="#00e000"/>
<rect x="38" y="144" width="1" height="1" fill="#000"/>
<rect x="26" y="145" width="2" height="1" fill="#000"/>
<rect x="35" y="145" width="3" height="1" fill="#000"/>
<rect x="26" y="146" width="1" height="1" fill="#000"/>
<rect x="27" y="146" width="1" height="1" fill="#00ffff"/>
<rect x="28" y="146" width="3" height="1" fill="#000"/>
<rect x="33" y="146" width="3" height="1" fill="#000"/>
<rect x="26" y="147" width="1" height="1" fill="#000"/>
<rect x="27" y="147" width="1" height="1" fill="#fff"/>
<rect x="28" y="147" width="2" height="1" fill="#00ffff"/>
<rect x="30" y="147" width="1" height="1" fill="#000"/>
<rect x="32" y="147" width="1" height="1" fill="#000"/>
<rect x="33" y="147" width="2" height="1" fill="#ffff00"/>
<rect x="35" y="147" width="1" height="1" fill="#000"/>
<rect x="26" y="148" width="1" height="1" fill="#000"/>
<rect x="27" y="148" width="1" height="1" fill="#fff"/>
<rect x="30" y="148" width="1" height="1" fill="#000"/>
<rect x="33" y="148" width="2" height="1" fill="#fff"/>
<rect x="35" y="148" width="2" height="1" fill="#000"/>
<rect x="26" y="149" width="1" height="1" fill="#000"/>
<rect x="27" y="149" width="2" height="1" fill="#fff"/>
<rect x="29" y="149" width="1" height="1" fill="#00ffff"/>
<rect x="30" y="149" width="1" height="1" fill="#000"/>
<rect x="33" y="149" width="2" height="1" fill="#fff"/>
<rect x="35" y="149" width="1" height="1" fill="#000"/>
<rect x="36" y="149" width="1" height="1" fill="#ff00ff"/>
<rect x="37" y="149" width="1" height="1" fill="#000"/>
<rect x="26" y="150" width="4" height="1" fill="#000"/>
<rect x="30" y="150" width="2" height="1" fill="#00ffff"/>
<rect x="32" y="150" width="1" height="1" fill="#000"/>
<rect x="34" y="150" width="1" height="1" fill="#fff"/>
<rect x="35" y="150" width="1" height="1" fill="#000"/>
<rect x="36" y="150" width="1" height="1" fill="#ff00ff"/>
<rect x="37" y="150" width="1" height="1" fill="#000"/>
<rect x="28" y="151" width="1" height="1" fill="#000"/>
<rect x="29" y="151" width="2" height="1" fill="#fff"/>
<rect x="31" y="151" width="4" height="1" fill="#000"/>
<rect x="36" y="151" width="2" height="1" fill="#000"/>
<rect x="25" y="152" width="2" height="1" fill="#000"/>
<rect x="28" y="152" width="1" height="1" fill="#000"/>
<rect x="29" y="152" width="2" height="1" fill="#fff"/>
<rect x="31" y="152" width="2" height="1" fill="#000"/>
<rect x="33" y="152" width="1" height="1" fill="#00ffff"/>
<rect x="34" y="152" width="2" height="1" fill="#000"/>
<rect x="24" y="153" width="1" height="1" fill="#000"/>
<rect x="25" y="153" width="3" height="1" fill="#fff"/>
<rect x="28" y="153" width="5" height="1" fill="#000"/>
<rect x="33" y="153" width="1" height="1" fill="#fff"/>
<rect x="34" y="153" width="3" height="1" fill="#00ffff"/>
<rect x="37" y="153" width="3" height="1" fill="#000"/>
<rect x="25" y="154" width="2" height="1" fill="#000"/>
<rect x="27" y="154" width="5" height="1" fill="#fff"/>
<rect x="32" y="154" width="1" height="1" fill="#000"/>
<rect x="33" y="154" width="1" height="1" fill="#fff"/>
<rect x="34" y="154" width="3" height="1" fill="#00ffff"/>
<rect x="37" y="154" width="2" height="1" fill="#000"/>
<rect x="27" y="155" width="2" height="1" fill="#000"/>
<rect x="29" y="155" width="6" height="1" fill="#fff"/>
<rect x="35" y="155" width="2" height="1" fill="#000"/>
<rect x="29" y="156" width="2" height="1" fill="#000"/>
<rect x="31" y="156" width="2" height="1" fill="#fff"/>
<rect x="33" y="156" width="2" height="1" fill="#000"/>
<rect x="31" y="157" width="2" height="1" fill="#000"/></g>
 <use href="#pj" y="16"/>
 <!-- folders -->
<g id="fd"><rect x="47" y="177" width="5" height="1" fill="#808080"/>
<rect x="46" y="178" width="1" height="1" fill="#808080"/>
<rect x="47" y="178" width="5" height="1" fill="#fff"/>
<rect x="52" y="178" width="1" height="1" fill="#808080"/>
<rect x="45" y="179" width="1" height="1" fill="#808080"/>
<rect x="46" y="179" width="1" height="1" fill="#fff"/>
<rect x="47" y="179" width="1" height="1" fill="#b8b8a0"/>
<rect x="48" y="179" width="1" height="1" fill="#ffff00"/>
<rect x="49" y="179" width="1" height="1" fill="#b8b8a0"/>
<rect x="50" y="179" width="1" height="1" fill="#ffff00"/>
<rect x="51" y="179" width="1" height="1" fill="#b8b8a0"/>
<rect x="52" y="179" width="1" height="1" fill="#fff"/>
<rect x="53" y="179" width="6" height="1" fill="#808080"/>
<rect x="45" y="180" width="1" height="1" fill="#808080"/>
<rect x="46" y="180" width="1" height="1" fill="#b8b8a0"/>
<rect x="47" y="180" width="1" height="1" fill="#ffff00"/>
<rect x="48" y="180" width="1" height="1" fill="#b8b8a0"/>
<rect x="49" y="180" width="1" height="1" fill="#ffff00"/>
<rect x="50" y="180" width="1" height="1" fill="#b8b8a0"/>
<rect x="51" y="180" width="1" height="1" fill="#ffff00"/>
<rect x="52" y="180" width="1" height="1" fill="#b8b8a0"/>
<rect x="53" y="180" width="5" height="1" fill="#fff"/>
<rect x="58" y="180" width="1" height="1" fill="#808080"/>
<rect x="45" y="181" width="1" height="1" fill="#808080"/>
<rect x="46" y="181" width="1" height="1" fill="#ffff00"/>
<rect x="47" y="181" width="1" height="1" fill="#b8b8a0"/>
<rect x="48" y="181" width="1" height="1" fill="#ffff00"/>
<rect x="49" y="181" width="1" height="1" fill="#b8b8a0"/>
<rect x="50" y="181" width="1" height="1" fill="#ffff00"/>
<rect x="51" y="181" width="1" height="1" fill="#b8b8a0"/>
<rect x="52" y="181" width="1" height="1" fill="#ffff00"/>
<rect x="53" y="181" width="1" height="1" fill="#b8b8a0"/>
<rect x="54" y="181" width="1" height="1" fill="#ffff00"/>
<rect x="55" y="181" width="1" height="1" fill="#b8b8a0"/>
<rect x="56" y="181" width="1" height="1" fill="#ffff00"/>
<rect x="57" y="181" width="1" height="1" fill="#000"/>
<rect x="58" y="181" width="1" height="1" fill="#808080"/>
<rect x="44" y="182" width="12" height="1" fill="#808080"/>
<rect x="56" y="182" width="1" height="1" fill="#000"/>
<rect x="57" y="182" width="1" height="1" fill="#ffff00"/>
<rect x="58" y="182" width="1" height="1" fill="#808080"/>
<rect x="44" y="183" width="1" height="1" fill="#808080"/>
<rect x="45" y="183" width="10" height="1" fill="#fff"/>
<rect x="55" y="183" width="1" height="1" fill="#b8b8a0"/>
<rect x="56" y="183" width="1" height="1" fill="#000"/>
<rect x="57" y="183" width="2" height="1" fill="#808080"/>
<rect x="44" y="184" width="1" height="1" fill="#808080"/>
<rect x="45" y="184" width="1" height="1" fill="#fff"/>
<rect x="46" y="184" width="1" height="1" fill="#b8b8a0"/>
<rect x="47" y="184" width="1" height="1" fill="#ffff00"/>
<rect x="48" y="184" width="1" height="1" fill="#b8b8a0"/>
<rect x="49" y="184" width="1" height="1" fill="#ffff00"/>
<rect x="50" y="184" width="1" height="1" fill="#b8b8a0"/>
<rect x="51" y="184" width="1" height="1" fill="#ffff00"/>
<rect x="52" y="184" width="1" height="1" fill="#b8b8a0"/>
<rect x="53" y="184" width="1" height="1" fill="#ffff00"/>
<rect x="54" y="184" width="1" height="1" fill="#b8b8a0"/>
<rect x="55" y="184" width="1" height="1" fill="#ffff00"/>
<rect x="56" y="184" width="1" height="1" fill="#000"/>
<rect x="57" y="184" width="1" height="1" fill="#808080"/>
<rect x="45" y="185" width="1" height="1" fill="#808080"/>
<rect x="46" y="185" width="1" height="1" fill="#fff"/>
<rect x="47" y="185" width="1" height="1" fill="#b8b8a0"/>
<rect x="48" y="185" width="1" height="1" fill="#ffff00"/>
<rect x="49" y="185" width="1" height="1" fill="#b8b8a0"/>
<rect x="50" y="185" width="1" height="1" fill="#ffff00"/>
<rect x="51" y="185" width="1" height="1" fill="#b8b8a0"/>
<rect x="52" y="185" width="1" height="1" fill="#ffff00"/>
<rect x="53" y="185" width="1" height="1" fill="#b8b8a0"/>
<rect x="54" y="185" width="1" height="1" fill="#ffff00"/>
<rect x="55" y="185" width="1" height="1" fill="#b8b8a0"/>
<rect x="56" y="185" width="1" height="1" fill="#ffff00"/>
<rect x="57" y="185" width="1" height="1" fill="#000"/>
<rect x="45" y="186" width="1" height="1" fill="#808080"/>
<rect x="46" y="186" width="1" height="1" fill="#b8b8a0"/>
<rect x="47" y="186" width="1" height="1" fill="#ffff00"/>
<rect x="48" y="186" width="1" height="1" fill="#b8b8a0"/>
<rect x="49" y="186" width="1" height="1" fill="#ffff00"/>
<rect x="50" y="186" width="1" height="1" fill="#b8b8a0"/>
<rect x="51" y="186" width="1" height="1" fill="#ffff00"/>
<rect x="52" y="186" width="1" height="1" fill="#b8b8a0"/>
<rect x="53" y="186" width="1" height="1" fill="#ffff00"/>
<rect x="54" y="186" width="1" height="1" fill="#b8b8a0"/>
<rect x="55" y="186" width="1" height="1" fill="#ffff00"/>
<rect x="56" y="186" width="1" height="1" fill="#b8b8a0"/>
<rect x="57" y="186" width="1" height="1" fill="#000"/>
<rect x="46" y="187" width="1" height="1" fill="#808080"/>
<rect x="47" y="187" width="1" height="1" fill="#fff"/>
<rect x="48" y="187" width="1" height="1" fill="#ffff00"/>
<rect x="49" y="187" width="1" height="1" fill="#b8b8a0"/>
<rect x="50" y="187" width="1" height="1" fill="#ffff00"/>
<rect x="51" y="187" width="1" height="1" fill="#b8b8a0"/>
<rect x="52" y="187" width="1" height="1" fill="#ffff00"/>
<rect x="53" y="187" width="1" height="1" fill="#b8b8a0"/>
<rect x="54" y="187" width="1" height="1" fill="#ffff00"/>
<rect x="55" y="187" width="1" height="1" fill="#b8b8a0"/>
<rect x="56" y="187" width="1" height="1" fill="#ffff00"/>
<rect x="57" y="187" width="1" height="1" fill="#808080"/>
<rect x="46" y="188" width="12" height="1" fill="#808080"/></g>
 <use href="#fd" y="64"/>
 <!-- sheet icons -->
<g id="sh"><rect x="66" y="192" width="8" height="1" fill="#808080"/>
<rect x="66" y="193" width="1" height="1" fill="#808080"/>
<rect x="67" y="193" width="7" height="1" fill="#fff"/>
<rect x="74" y="193" width="2" height="1" fill="#000"/>
<rect x="63" y="194" width="10" height="1" fill="#000"/>
<rect x="73" y="194" width="1" height="1" fill="#fff"/>
<rect x="74" y="194" width="1" height="1" fill="#000"/>
<rect x="75" y="194" width="1" height="1" fill="#fff"/>
<rect x="76" y="194" width="1" height="1" fill="#000"/>
<rect x="63" y="195" width="1" height="1" fill="#000"/>
<rect x="64" y="195" width="2" height="1" fill="#fff"/>
<rect x="66" y="195" width="1" height="1" fill="#000"/>
<rect x="67" y="195" width="2" height="1" fill="#fff"/>
<rect x="69" y="195" width="1" height="1" fill="#000"/>
<rect x="70" y="195" width="2" height="1" fill="#fff"/>
<rect x="72" y="195" width="1" height="1" fill="#000"/>
<rect x="73" y="195" width="1" height="1" fill="#fff"/>
<rect x="74" y="195" width="4" height="1" fill="#000"/>
<rect x="63" y="196" width="10" height="1" fill="#000"/>
<rect x="73" y="196" width="4" height="1" fill="#fff"/>
<rect x="77" y="196" width="1" height="1" fill="#000"/>
<rect x="63" y="197" width="1" height="1" fill="#000"/>
<rect x="64" y="197" width="2" height="1" fill="#fff"/>
<rect x="66" y="197" width="1" height="1" fill="#000"/>
<rect x="67" y="197" width="2" height="1" fill="#fff"/>
<rect x="69" y="197" width="1" height="1" fill="#000"/>
<rect x="70" y="197" width="2" height="1" fill="#fff"/>
<rect x="72" y="197" width="1" height="1" fill="#000"/>
<rect x="73" y="197" width="4" height="1" fill="#fff"/>
<rect x="77" y="197" width="1" height="1" fill="#000"/>
<rect x="63" y="198" width="10" height="1" fill="#000"/>
<rect x="73" y="198" width="4" height="1" fill="#fff"/>
<rect x="77" y="198" width="1" height="1" fill="#000"/>
<rect x="63" y="199" width="1" height="1" fill="#000"/>
<rect x="64" y="199" width="2" height="1" fill="#fff"/>
<rect x="66" y="199" width="1" height="1" fill="#000"/>
<rect x="67" y="199" width="2" height="1" fill="#fff"/>
<rect x="69" y="199" width="1" height="1" fill="#000"/>
<rect x="70" y="199" width="2" height="1" fill="#fff"/>
<rect x="72" y="199" width="1" height="1" fill="#000"/>
<rect x="73" y="199" width="4" height="1" fill="#fff"/>
<rect x="77" y="199" width="1" height="1" fill="#000"/>
<rect x="63" y="200" width="10" height="1" fill="#000"/>
<rect x="73" y="200" width="4" height="1" fill="#fff"/>
<rect x="77" y="200" width="1" height="1" fill="#000"/>
<rect x="63" y="201" width="1" height="1" fill="#000"/>
<rect x="64" y="201" width="2" height="1" fill="#fff"/>
<rect x="66" y="201" width="1" height="1" fill="#000"/>
<rect x="67" y="201" width="2" height="1" fill="#fff"/>
<rect x="69" y="201" width="1" height="1" fill="#000"/>
<rect x="70" y="201" width="2" height="1" fill="#fff"/>
<rect x="72" y="201" width="1" height="1" fill="#000"/>
<rect x="73" y="201" width="4" height="1" fill="#fff"/>
<rect x="77" y="201" width="1" height="1" fill="#000"/>
<rect x="63" y="202" width="10" height="1" fill="#000"/>
<rect x="73" y="202" width="4" height="1" fill="#fff"/>
<rect x="77" y="202" width="1" height="1" fill="#000"/>
<rect x="66" y="203" width="1" height="1" fill="#808080"/>
<rect x="67" y="203" width="10" height="1" fill="#fff"/>
<rect x="77" y="203" width="1" height="1" fill="#000"/>
<rect x="66" y="204" width="1" height="1" fill="#808080"/>
<rect x="67" y="204" width="10" height="1" fill="#fff"/>
<rect x="77" y="204" width="1" height="1" fill="#000"/>
<rect x="67" y="205" width="11" height="1" fill="#000"/></g>
 <use href="#sh" y="16"/>
 <!-- workbook -->
<rect x="65" y="223" width="9" height="1" fill="#000"/>
<rect x="65" y="224" width="1" height="1" fill="#000"/>
<rect x="66" y="224" width="7" height="1" fill="#fff"/>
<rect x="73" y="224" width="2" height="1" fill="#000"/>
<rect x="65" y="225" width="1" height="1" fill="#000"/>
<rect x="66" y="225" width="7" height="1" fill="#fff"/>
<rect x="73" y="225" width="1" height="1" fill="#000"/>
<rect x="74" y="225" width="1" height="1" fill="#fff"/>
<rect x="75" y="225" width="1" height="1" fill="#000"/>
<rect x="65" y="226" width="1" height="1" fill="#000"/>
<rect x="66" y="226" width="7" height="1" fill="#fff"/>
<rect x="73" y="226" width="4" height="1" fill="#000"/>
<rect x="61" y="227" width="1" height="1" fill="#00a000"/>
<rect x="62" y="227" width="1" height="1" fill="#fff"/>
<rect x="63" y="227" width="1" height="1" fill="#00a000"/>
<rect x="65" y="227" width="1" height="1" fill="#000"/>
<rect x="66" y="227" width="2" height="1" fill="#fff"/>
<rect x="68" y="227" width="3" height="1" fill="#00a000"/>
<rect x="71" y="227" width="5" height="1" fill="#fff"/>
<rect x="76" y="227" width="1" height="1" fill="#000"/>
<rect x="62" y="228" width="2" height="1" fill="#fff"/>
<rect x="64" y="228" width="1" height="1" fill="#00a000"/>
<rect x="65" y="228" width="1" height="1" fill="#000"/>
<rect x="66" y="228" width="1" height="1" fill="#fff"/>
<rect x="67" y="228" width="3" height="1" fill="#00a000"/>
<rect x="70" y="228" width="6" height="1" fill="#fff"/>
<rect x="76" y="228" width="1" height="1" fill="#000"/>
<rect x="63" y="229" width="2" height="1" fill="#fff"/>
<rect x="65" y="229" width="4" height="1" fill="#00a000"/>
<rect x="69" y="229" width="7" height="1" fill="#fff"/>
<rect x="76" y="229" width="1" height="1" fill="#000"/>
<rect x="64" y="230" width="2" height="1" fill="#fff"/>
<rect x="66" y="230" width="2" height="1" fill="#00a000"/>
<rect x="68" y="230" width="8" height="1" fill="#fff"/>
<rect x="76" y="230" width="1" height="1" fill="#000"/>
<rect x="64" y="231" width="2" height="1" fill="#00a000"/>
<rect x="66" y="231" width="1" height="1" fill="#fff"/>
<rect x="67" y="231" width="2" height="1" fill="#00a000"/>
<rect x="69" y="231" width="7" height="1" fill="#fff"/>
<rect x="76" y="231" width="1" height="1" fill="#000"/>
<rect x="63" y="232" width="3" height="1" fill="#00a000"/>
<rect x="66" y="232" width="1" height="1" fill="#fff"/>
<rect x="67" y="232" width="3" height="1" fill="#00a000"/>
<rect x="70" y="232" width="6" height="1" fill="#fff"/>
<rect x="76" y="232" width="1" height="1" fill="#000"/>
<rect x="62" y="233" width="3" height="1" fill="#00a000"/>
<rect x="65" y="233" width="1" height="1" fill="#000"/>
<rect x="66" y="233" width="2" height="1" fill="#fff"/>
<rect x="68" y="233" width="3" height="1" fill="#00a000"/>
<rect x="71" y="233" width="5" height="1" fill="#fff"/>
<rect x="76" y="233" width="1" height="1" fill="#000"/>
<rect x="61" y="234" width="3" height="1" fill="#00a000"/>
<rect x="65" y="234" width="1" height="1" fill="#000"/>
<rect x="66" y="234" width="3" height="1" fill="#fff"/>
<rect x="69" y="234" width="2" height="1" fill="#00a000"/>
<rect x="71" y="234" width="5" height="1" fill="#fff"/>
<rect x="76" y="234" width="1" height="1" fill="#000"/>
<rect x="65" y="235" width="1" height="1" fill="#000"/>
<rect x="66" y="235" width="10" height="1" fill="#fff"/>
<rect x="76" y="235" width="1" height="1" fill="#000"/>
<rect x="65" y="236" width="1" height="1" fill="#000"/>
<rect x="66" y="236" width="10" height="1" fill="#fff"/>
<rect x="76" y="236" width="1" height="1" fill="#000"/>
<rect x="65" y="237" width="12" height="1" fill="#000"/>
 <!-- module icon -->
<rect x="70" y="256" width="1" height="1" fill="#000"/>
<rect x="74" y="256" width="1" height="1" fill="#000"/>
<rect x="69" y="257" width="1" height="1" fill="#000"/>
<rect x="70" y="257" width="1" height="1" fill="#ffff00"/>
<rect x="71" y="257" width="1" height="1" fill="#000"/>
<rect x="73" y="257" width="1" height="1" fill="#000"/>
<rect x="74" y="257" width="1" height="1" fill="#ff00ff"/>
<rect x="75" y="257" width="1" height="1" fill="#000"/>
<rect x="68" y="258" width="1" height="1" fill="#000"/>
<rect x="69" y="258" width="1" height="1" fill="#ffff00"/>
<rect x="70" y="258" width="2" height="1" fill="#000"/>
<rect x="73" y="258" width="2" height="1" fill="#000"/>
<rect x="75" y="258" width="1" height="1" fill="#ff00ff"/>
<rect x="76" y="258" width="1" height="1" fill="#000"/>
<rect x="68" y="259" width="2" height="1" fill="#000"/>
<rect x="70" y="259" width="1" height="1" fill="#ffff00"/>
<rect x="71" y="259" width="1" height="1" fill="#000"/>
<rect x="73" y="259" width="1" height="1" fill="#000"/>
<rect x="74" y="259" width="1" height="1" fill="#ff00ff"/>
<rect x="75" y="259" width="2" height="1" fill="#000"/>
<rect x="67" y="260" width="2" height="1" fill="#000"/>
<rect x="69" y="260" width="1" height="1" fill="#ffff00"/>
<rect x="70" y="260" width="2" height="1" fill="#000"/>
<rect x="73" y="260" width="2" height="1" fill="#000"/>
<rect x="75" y="260" width="1" height="1" fill="#ff00ff"/>
<rect x="76" y="260" width="1" height="1" fill="#000"/>
<rect x="66" y="261" width="1" height="1" fill="#000"/>
<rect x="69" y="261" width="1" height="1" fill="#000"/>
<rect x="71" y="261" width="1" height="1" fill="#000"/>
<rect x="73" y="261" width="1" height="1" fill="#000"/>
<rect x="75" y="261" width="1" height="1" fill="#000"/>
<rect x="64" y="262" width="2" height="1" fill="#000"/>
<rect x="72" y="262" width="1" height="1" fill="#000"/>
<rect x="74" y="262" width="1" height="1" fill="#000"/>
<rect x="62" y="263" width="1" height="1" fill="#000"/>
<rect x="63" y="263" width="1" height="1" fill="#ff00ff"/>
<rect x="64" y="263" width="1" height="1" fill="#000"/>
<rect x="67" y="263" width="4" height="1" fill="#000"/>
<rect x="73" y="263" width="1" height="1" fill="#000"/>
<rect x="62" y="264" width="2" height="1" fill="#000"/>
<rect x="64" y="264" width="1" height="1" fill="#ff00ff"/>
<rect x="65" y="264" width="2" height="1" fill="#000"/>
<rect x="67" y="264" width="1" height="1" fill="#00e000"/>
<rect x="68" y="264" width="1" height="1" fill="#000"/>
<rect x="69" y="264" width="1" height="1" fill="#00e000"/>
<rect x="70" y="264" width="1" height="1" fill="#000"/>
<rect x="74" y="264" width="1" height="1" fill="#000"/>
<rect x="62" y="265" width="1" height="1" fill="#000"/>
<rect x="63" y="265" width="1" height="1" fill="#ff00ff"/>
<rect x="64" y="265" width="2" height="1" fill="#000"/>
<rect x="67" y="265" width="1" height="1" fill="#000"/>
<rect x="68" y="265" width="1" height="1" fill="#00e000"/>
<rect x="69" y="265" width="1" height="1" fill="#000"/>
<rect x="70" y="265" width="1" height="1" fill="#00e000"/>
<rect x="71" y="265" width="1" height="1" fill="#000"/>
<rect x="73" y="265" width="3" height="1" fill="#000"/>
<rect x="63" y="266" width="1" height="1" fill="#000"/>
<rect x="64" y="266" width="1" height="1" fill="#ff00ff"/>
<rect x="65" y="266" width="1" height="1" fill="#000"/>
<rect x="68" y="266" width="3" height="1" fill="#000"/>
<rect x="72" y="266" width="1" height="1" fill="#000"/>
<rect x="73" y="266" width="1" height="1" fill="#00ffff"/>
<rect x="74" y="266" width="1" height="1" fill="#000"/>
<rect x="75" y="266" width="1" height="1" fill="#00ffff"/>
<rect x="76" y="266" width="1" height="1" fill="#000"/>
<rect x="64" y="267" width="1" height="1" fill="#000"/>
<rect x="73" y="267" width="1" height="1" fill="#000"/>
<rect x="74" y="267" width="1" height="1" fill="#00ffff"/>
<rect x="75" y="267" width="1" height="1" fill="#000"/>
<rect x="76" y="267" width="1" height="1" fill="#00ffff"/>
<rect x="77" y="267" width="1" height="1" fill="#000"/>
<rect x="74" y="268" width="3" height="1" fill="#000"/>
</svg>
<div class="a" style="left:81px;top:255px;width:80px;height:16px;background:#f0f0f0"></div>
<div class="trb" style="left:45px;top:145px">VBAProject (Book1)</div>
<div class="trb" style="left:45px;top:161px">VBAProject (Book2.xlsm)</div>
<div class="tr" style="left:63px;top:177px">Microsoft Excel Objects</div>
<div class="tr" style="left:82px;top:193px">Sheet1 (<span style="letter-spacing:1.2px">מוצרים</span>)</div>
<div class="tr" style="left:82px;top:209px">Sheet2 (<span style="letter-spacing:1.2px">מחירים</span>)</div>
<div class="tr" style="left:82px;top:225px">ThisWorkbook</div>
<div class="tr" style="left:63px;top:241px">Modules</div>
<div class="tr" style="left:82px;top:257px">Caculate_Prices</div>

<!-- Properties pane -->
<div class="ptitle" style="top:564px"></div>
<div class="t" style="left:1px;top:566px;font-size:12.5px;transform:scaleX(.915);transform-origin:0 0">Properties - Caculate_Prices</div>
<div class="xbtn" style="left:259px;top:565px"></div>
<svg style="left:259px;top:565px" width="20" height="20"><path d="M5 5 L15 15 M15 5 L5 15" stroke="#000" stroke-width="2.2"/></svg>
<div class="a" style="left:0;top:590px;width:278px;height:19px;background:#fff;border:1px solid #7a7a7a"></div>
<div class="t" style="left:4px;top:594px;font-size:11.65px;font-weight:bold">Caculate_Prices</div>
<div class="t" style="left:98px;top:594px;font-size:10.6px">Module</div>
<svg style="left:262px;top:594px" width="14" height="12"><path d="M3.5 4 L7 7.5 L10.5 4" stroke="#404040" stroke-width="1" fill="none"/></svg>
<!-- tabs -->
<div class="a" style="left:1px;top:611px;width:65px;height:23px;background:#fafafa;border:1px solid #d9d9d9;border-bottom:none"></div>
<div class="a" style="left:66px;top:613px;width:66px;height:19px;background:#f0f0f0;border:1px solid #d9d9d9;border-bottom:none"></div>
<div class="t" style="left:8px;top:616px;font-size:10.7px">Alphabetic</div>
<div class="t" style="left:69px;top:618px;font-size:10.9px">Categorized</div>
<div class="a" style="left:1px;top:633px;width:277px;height:115px;background:#fff;border:1px solid #d9d9d9;border-bottom:none"></div>
<div class="a" style="left:4px;top:633px;width:273px;height:115px;background:#fff;border:1px solid #a0a0a0;border-bottom:none"></div>
<div class="a" style="left:6px;top:635px;width:269px;height:113px;background:#fff;border:1px solid #696969;border-bottom:none;border-right-color:#e0e0e0"></div>
<div class="a" style="left:7px;top:636px;width:267px;height:16px;border-bottom:1px solid #a0a0a0"></div>
<div class="a" style="left:7px;top:636px;width:37px;height:15px;background:#f0f0f0"></div><div class="a" style="left:44px;top:636px;width:1px;height:16px;background:#d0d0d0"></div>
<div class="t" style="left:8px;top:639.5px;font-size:10.3px">(Name)</div>
<div class="t" style="left:47px;top:639.5px;font-size:10.5px">Caculate_Prices</div>

<!-- Code window -->
<div class="a" style="left:286px;top:74px;width:735px;height:674px;border-left:1px solid #808080;border-top:1px solid #808080;background:#f0f0f0"></div>
<div class="a" style="left:287px;top:75px;width:734px;height:673px;border-left:1px solid #a0a0a0;border-top:1px solid #a0a0a0"></div>
<div class="a" style="left:288px;top:76px;width:733px;height:1px;background:#fff"></div><div class="a" style="left:288px;top:76px;width:1px;height:26px;background:#fff"></div>
<div class="a" style="left:298px;top:78px;width:723px;height:22px;background:#fff;border:1px solid #7a7a7a;border-right:none"></div>
<div class="t" style="left:302px;top:83px;font-size:11.4px;font-weight:bold">(General)</div>
<div class="a" style="left:288px;top:102px;width:733px;height:646px;border-left:1px solid #a0a0a0;border-top:1px solid #a0a0a0;background:#fff"></div><div class="a" style="left:289px;top:103px;width:732px;height:645px;border-left:1px solid #696969;border-top:1px solid #696969"></div>
<div class="a" style="left:290px;top:104px;width:21px;height:644px;background:#f0f0f0;border-right:1px solid #000"></div>

<div class="code"><span class="k">Public Sub</span> calculatePrices()

<span class="k">Dim</span> strCurProductName <span class="k">As String</span>, lngCurRow <span class="k">As Long</span>
<span class="k">Dim</span> intProductsCol <span class="k">As Integer</span>, intPricesCol <span class="k">As Integer</span>
<span class="k">Dim</span> intTotalPriceCol <span class="k">As Integer</span>, strPrices <span class="k">As String</span>
<span class="k">Dim</span> dblTotalPrice <span class="k">As Double</span>, strProducts <span class="k">As String</span>
<span class="k">Dim</span> arrProducts <span class="k">As Variant</span>, dblCurProductPrice <span class="k">As Double</span>

<span class="k">With</span> Sheets("מוצרים")

    lngCurRow = 2
    intProductsCol = 1
    intPricesCol = 2
    intTotalPriceCol = 3

    <span class="k">While</span> .Cells(lngCurRow, intProductsCol) &lt;&gt; ""
        strPrices = ""
        dblTotalPrice = 0

        strProducts = .Cells(lngCurRow, intProductsCol)
        arrProducts = Split(strProducts, ",")

        <span class="k">For</span> lngCurArrIndex = 0 <span class="k">To</span> UBound(arrProducts)
            strCurProductName = Trim(arrProducts(lngCurArrIndex))
            dblCurProductPrice = calculateProductPrice(strCurProductName)
            strPrices = strPrices &amp; IIf(strPrices &lt;&gt; "", ",", "") &amp; dblCurProductPrice
            dblTotalPrice = dblTotalPrice + dblCurProductPrice
        <span class="k">Next</span> lngCurArrIndex

        .Cells(lngCurRow, intPricesCol) = strPrices
        .Cells(lngCurRow, intTotalPriceCol) = dblTotalPrice

        lngCurRow = lngCurRow + 1
    <span class="k">Wend</span>


<span class="k">End With</span>

<span class="k">End Sub</span></div>
</body></html>
